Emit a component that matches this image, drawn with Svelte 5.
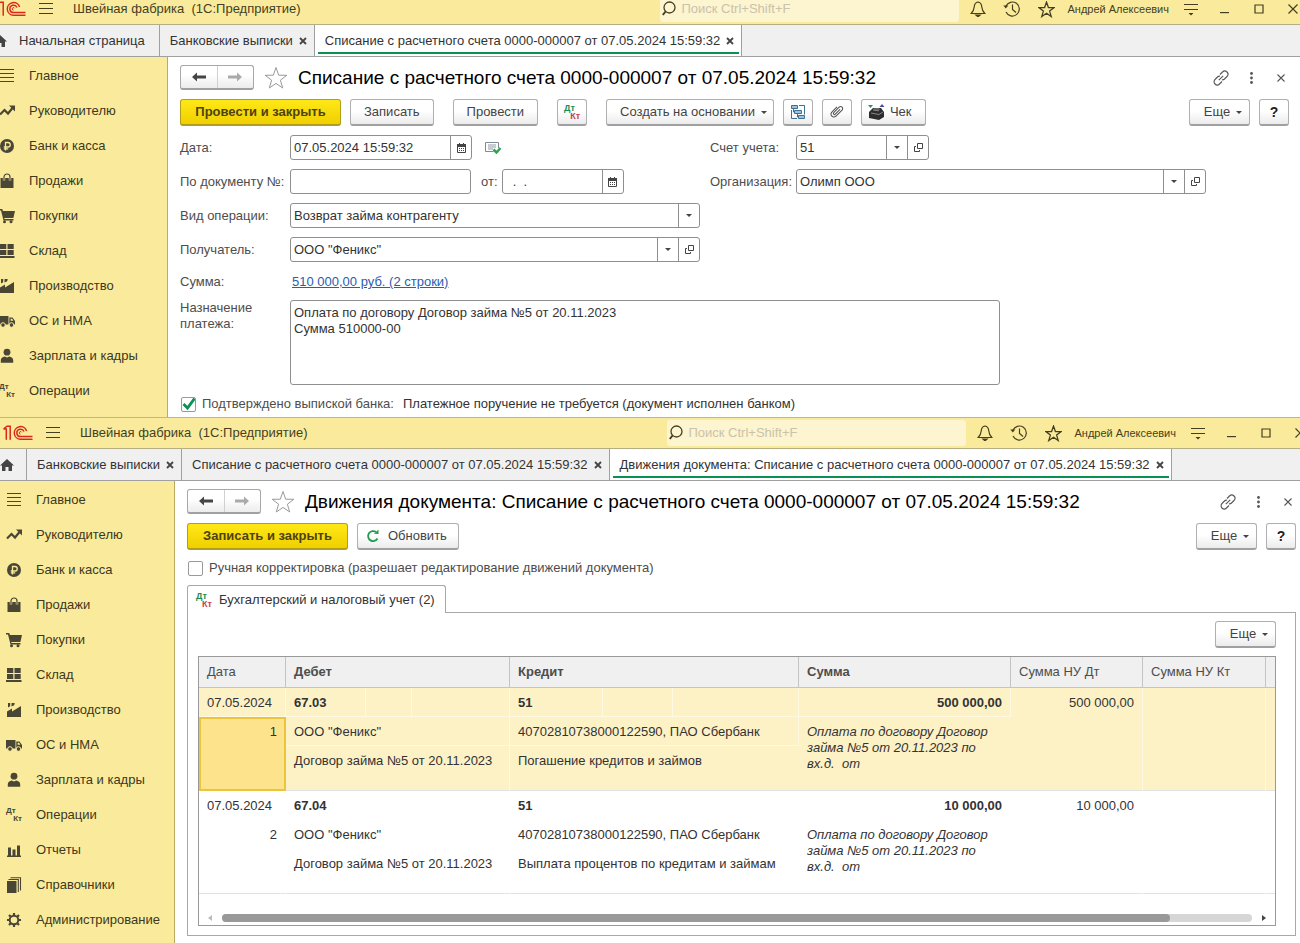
<script>
  const menu = [
    ['list', 'Главное'],
    ['trend', 'Руководителю'],
    ['ruble', 'Банк и касса'],
    ['bag', 'Продажи'],
    ['cart', 'Покупки'],
    ['stock', 'Склад'],
    ['factory', 'Производство'],
    ['truck', 'ОС и НМА'],
    ['person', 'Зарплата и кадры'],
    ['dtkt', 'Операции'],
    ['chart', 'Отчеты'],
    ['books', 'Справочники'],
    ['gear', 'Администрирование']
  ];

  const docTitle = 'Списание с расчетного счета 0000-000007 от 07.05.2024 15:59:32';
  const movesTitle = 'Движения документа: ' + docTitle;

  const entries = [
    {
      n: 1, date: '07.05.2024', debit: '67.03', credit: '51', sum: '500 000,00', tax: '500 000,00',
      partner: 'ООО "Феникс"', contract: 'Договор займа №5 от 20.11.2023',
      account: '40702810738000122590, ПАО Сбербанк', item: 'Погашение кредитов и займов'
    },
    {
      n: 2, date: '07.05.2024', debit: '67.04', credit: '51', sum: '10 000,00', tax: '10 000,00',
      partner: 'ООО "Феникс"', contract: 'Договор займа №5 от 20.11.2023',
      account: '40702810738000122590, ПАО Сбербанк', item: 'Выплата процентов по кредитам и займам'
    }
  ];
  const note = 'Оплата по договору Договор займа №5 от 20.11.2023 по вх.д.\u00a0 от';

  let purpose = $state('Оплата по договору Договор займа №5 от 20.11.2023\nСумма 510000-00');
  let confirmed = $state(true);
  let manual = $state(false);
</script>

{#snippet icon(name)}
  {#if name === 'dtkt'}
    <span class="dtkt mono"><b>Дт</b><b>Кт</b></span>
  {:else}
    <svg class="ic" width="16" height="16" viewBox="0 0 16 16" fill="#4a4635" aria-hidden="true">
      {#if name === 'list'}
        <path d="M1 1h14v1H1zM1 5h14v1H1zM1 9h14v1H1zM1 13h14v1H1z" />
      {:else if name === 'trend'}
        <path d="M1 11.500 5.500 7l3.500 3.500L13.500 5" fill="none" stroke="#4a4635" stroke-width="2.200" />
        <path d="M10 2.500h6v6z" />
      {:else if name === 'ruble'}
        <circle cx="8" cy="8" r="7" />
        <path d="M6.500 12.500v-8H9a2.200 2.200 0 0 1 0 4.500H4.800M4.800 10.800h4.400" fill="none" stroke="#faeb9c" stroke-width="1.300" />
      {:else if name === 'bag'}
        <path d="M1.500 5h13v10h-13z" />
        <path d="M5 7.500V4a3 3 0 0 1 6 0v3.500" fill="none" stroke="#faeb9c" stroke-width="2.400" />
        <path d="M5 7.500V4a3 3 0 0 1 6 0v3.500" fill="none" stroke="#4a4635" stroke-width="1.200" />
      {:else if name === 'cart'}
        <path d="M0 1h3.200l.8 2h12l-1.600 7H5.200l.3 1h9v1.400h-10L2 2.400H0z" />
        <circle cx="5.500" cy="13.700" r="1.500" /><circle cx="12" cy="13.700" r="1.500" />
      {:else if name === 'stock'}
        <path d="M1 1h6.300v5H1zM8.500 1h6.200v5H8.500zM1 7h6.300v5H1zM8.500 7h6.200v5H8.500zM0 13h15.500v2H0z" />
      {:else if name === 'factory'}
        <path d="M1 15V9.500l5-3V9.500l9-5.500v11zM2 1h2.200v3.200L2 5.500zM5.500 1h3.200l-.5 2.200-2.700 1.300z" />
      {:else if name === 'truck'}
        <path d="M0 3h9.500v8.500H0zM10.300 4.500h3.200L16 8v3.500h-5.700z" />
        <path d="M11.600 5.800h1.500l1.300 2h-2.800z" fill="#faeb9c" />
        <circle cx="4" cy="12" r="2.300" stroke="#faeb9c" /><circle cx="12.500" cy="12" r="2.300" stroke="#faeb9c" />
      {:else if name === 'person'}
        <circle cx="8" cy="4.200" r="3.400" />
        <path d="M1.800 14.800v-2.600c0-2 1.800-3.400 4-3.700L8 9.600l2.200-1.100c2.200.3 4 1.700 4 3.700v2.600z" />
      {:else if name === 'chart'}
        <path d="M1 13.500h14V15H1zM2 5.500h3v8H2zM6.500 7.500h3v6h-3zM11 3.500h3v10h-3z" />
      {:else if name === 'books'}
        <path d="M1 4h9.500v12H1z" />
        <path d="M2.500 2.500H12.300V15M4.500.8H14.500V13.500" fill="none" stroke="#4a4635" stroke-width="1.100" />
      {:else if name === 'gear'}
        <circle cx="8" cy="8" r="4.300" fill="none" stroke="#4a4635" stroke-width="2" />
        <path d="M8 1v2.500M8 12.500V15M1 8h2.500M12.500 8H15M3 3l1.800 1.800M11.200 11.200 13 13M13 3l-1.800 1.800M4.800 11.200 3 13" stroke="#4a4635" stroke-width="2.200" />
      {/if}
    </svg>
  {/if}
{/snippet}

{#snippet star(size, color)}
  <svg width={size} height={size} viewBox="0 0 24 24" fill="none" stroke={color} stroke-width={size > 20 ? 1 : 1.8} aria-hidden="true">
    <path d="M12 1.500 14.700 9.200 22.800 9.300 16.400 14.200 18.700 22 12 17.400 5.300 22 7.600 14.200 1.200 9.300 9.300 9.200z" />
  </svg>
{/snippet}

{#snippet caret()}
  <svg class="caret" width="6" height="3" viewBox="0 0 6 3" aria-hidden="true"><path d="M0 0h6L3 3z" fill="#444" /></svg>
{/snippet}

{#snippet openIcon()}
  <svg width="11" height="11" viewBox="0 0 11 11" fill="none" stroke="#444" aria-hidden="true">
    <path d="M4.500 1.500h5v5h-5zM3 4.500H1.500v5h5V8" />
  </svg>
{/snippet}

{#snippet calendar()}
  <svg width="9" height="10" viewBox="0 0 9 10" aria-hidden="true">
    <path d="M.5 1.500h8v8h-8z" fill="#fff" stroke="#444" />
    <path d="M0 1h9v3H0zM2 0h1v2H2zM6 0h1v2H6zM2 5h1v1H2zM4 5h1v1H4zM6 5h1v1H6zM2 7h1v1H2zM4 7h1v1H4zM6 7h1v1H6z" fill="#444" />
  </svg>
{/snippet}

{#snippet closeMark()}
  <svg width="8" height="8" viewBox="0 0 8 8" aria-hidden="true"><path d="M1 1l6 6M7 1 1 7" stroke="#444" stroke-width="1.800" /></svg>
{/snippet}

{#snippet dtktColor()}
  <span class="dtkt color"><b>Дт</b><b>Кт</b></span>
{/snippet}

{#snippet titleBar(id)}
  <header class="bar">
    <svg class="logo" width="30" height="16" viewBox="0 0 30 16" fill="none" stroke="#d8291c" stroke-width="1.500" aria-hidden="true">
      <path d="M.5 4h2.800v10.700M.5 4 4 1.200h3.200v13.500" />
      <path d="M23.600 6A6.300 6.300 0 1 0 17.500 14.200H29.500" />
      <path d="M21 6.500A3.700 3.700 0 1 0 17.500 11.600H29.500" />
      <path d="M18.700 7.300a1.300 1.300 0 1 0-1.200 1.900" stroke-width="1" />
    </svg>
    <button class="bare burger" aria-label="Меню">
      <svg width="16" height="12" viewBox="0 0 16 12"><path d="M1 0h14v1H1zM1 5h14v1H1zM1 10h14v1H1z" fill="#453f22" /></svg>
    </button>
    <span class="app-name">Швейная фабрика&nbsp; (1С:Предприятие)</span>
    <label class="search" for="search-{id}">
      <svg width="16" height="16" viewBox="0 0 16 16" fill="none" stroke="#453f22" aria-label="Поиск">
        <circle cx="7.500" cy="6.500" r="5.500" stroke-width="1.300" /><path d="M3.600 10.500.8 14" stroke-width="2" />
      </svg>
      <input id="search-{id}" type="text" placeholder="Поиск Ctrl+Shift+F" />
    </label>
    <div class="tools">
      <button class="bare" aria-label="Уведомления">
        <svg width="16" height="16" viewBox="0 0 16 16" fill="none" stroke="#453f22" stroke-width="1.200"><path d="M8 1c-3 .5-3.600 2.500-3.800 5S3 10.500 1.200 12.500h13.600C13 10.500 12 8.500 11.800 6S11 1.500 8 1z" /><path d="M6 14.200h4L8 15.800z" fill="#453f22" /></svg>
      </button>
      <button class="bare" aria-label="История">
        <svg width="18" height="16" viewBox="0 0 18 16" fill="none" stroke="#453f22" stroke-width="1.200"><path d="M2.800 5.500A7 7 0 1 1 3 11M9.500 3.500v5l3.500 3" /><path d="M.3 4.500h5L2.800 7.500z" fill="#453f22" stroke="none" /></svg>
      </button>
      <button class="bare" aria-label="Избранное">{@render star(17, '#453f22')}</button>
    </div>
    <span class="user">Андрей Алексеевич</span>
    <div class="tools">
      <button class="bare" aria-label="Настройки">
        <svg width="16" height="13" viewBox="0 0 16 13"><path d="M1 1h14v1H1zM1 6h14v1H1zM5.500 10h5L8 12.500z" fill="#453f22" /></svg>
      </button>
      <button class="bare" aria-label="Свернуть">
        <svg width="10" height="10" viewBox="0 0 10 10"><path d="M0 8h9v1.200H0z" fill="#453f22" /></svg>
      </button>
      <button class="bare" aria-label="Развернуть">
        <svg width="10" height="10" viewBox="0 0 10 10"><path d="M1 1h8v8H1z" fill="none" stroke="#453f22" stroke-width="1.200" /></svg>
      </button>
      <button class="bare" aria-label="Закрыть">
        <svg width="10" height="10" viewBox="0 0 10 10"><path d="M.5.5l9 9M9.500.5l-9 9" stroke="#453f22" stroke-width="1.200" /></svg>
      </button>
    </div>
  </header>
{/snippet}

{#snippet tab(text, active)}
  <div class="tab" class:active>
    <a href="#tab">{text}</a>
    <button class="bare" aria-label="Закрыть вкладку">{@render closeMark()}</button>
  </div>
{/snippet}

{#snippet home()}
  <svg class="home-ic" width="14" height="12" viewBox="0 0 14 12" aria-hidden="true"><path d="M7 0 14 6.500h-2V12H8.500V8h-3v4H2V6.500H0z" fill="#444" /></svg>
{/snippet}

{#snippet side(count)}
  <nav class="side">
    {#each menu.slice(0, count) as [name, label]}
      <a href="#section">{@render icon(name)}<span>{label}</span></a>
    {/each}
  </nav>
{/snippet}

{#snippet heading(text)}
  <div class="heading">
    <div class="history">
      <button aria-label="Назад"><svg width="14" height="10" viewBox="0 0 14 10"><path d="M0 5l5-4.500v3h9v3H5v3z" fill="#444" /></svg></button>
      <button aria-label="Вперед"><svg width="14" height="10" viewBox="0 0 14 10"><path d="M14 5 9 .5v3H0v3h9v3z" fill="#aaa" /></svg></button>
    </div>
    <button class="bare fav" aria-label="В избранное">{@render star(24, '#999')}</button>
    <h1>{text}</h1>
    <div class="form-tools">
      <button class="bare" aria-label="Ссылка">
        <svg width="16" height="16" viewBox="0 0 16 16" fill="none" stroke="#555" stroke-width="1.100">
          <path d="M7 4.500l2.500-2.500a2.900 2.900 0 0 1 4.500 4.500L11.500 9a2.900 2.900 0 0 1-2.500.8M9 11.500l-2.500 2.500a2.900 2.900 0 0 1-4.500-4.500L4.500 7a2.900 2.900 0 0 1 2.500-.8M5.800 10.200l4.400-4.400" />
        </svg>
      </button>
      <button class="bare" aria-label="Действия">
        <svg width="3" height="12" viewBox="0 0 3 12" fill="#555"><circle cx="1.500" cy="1.500" r="1.400" /><circle cx="1.500" cy="6" r="1.400" /><circle cx="1.500" cy="10.500" r="1.400" /></svg>
      </button>
      <button class="bare" aria-label="Закрыть форму">
        <svg width="8" height="8" viewBox="0 0 8 8"><path d="M.5.5l7 7M7.500.5l-7 7" stroke="#555" stroke-width="1.100" /></svg>
      </button>
    </div>
  </div>
{/snippet}

{#snippet picker(id, value, withOpen)}
  <div class="field">
    <div class="pick">
      <select {id}><option>{value}</option></select>
      <span class="cap">{@render caret()}</span>
    </div>
    {#if withOpen}<button class="cap" aria-label="Открыть">{@render openIcon()}</button>{/if}
  </div>
{/snippet}

<main>
  <section class="window first">
    {@render titleBar('doc')}
    <div class="tabs">
      <div class="tab home">{@render home()}<a href="#home">Начальная страница</a></div>
      {@render tab('Банковские выписки', false)}
      {@render tab(docTitle, true)}
    </div>
    <div class="body">
      {@render side(10)}
      <div class="content">
        {@render heading(docTitle)}
        <div class="toolbar">
          <button class="btn primary">Провести и закрыть</button>
          <button class="btn">Записать</button>
          <button class="btn apart">Провести</button>
          <button class="btn square apart" aria-label="Дт Кт">{@render dtktColor()}</button>
          <button class="btn apart drop">Создать на основании {@render caret()}</button>
          <button class="btn square" aria-label="Структура подчиненности">
            <svg width="16" height="16" viewBox="0 0 16 16" fill="none" stroke="#3e7295">
              <path d="M1.500 1.500h6v3h-6zM4.500 6.500h7v3h-7zM8.500 11.500h6v3h-6z" fill="#9cc3de" />
              <path d="M9 1.500h5.500v9M1.500 6v8.500H7M3.500 4.500v3.500h1M7.500 9.500V13h1" />
            </svg>
          </button>
          <button class="btn square" aria-label="Файлы">
            <svg width="14" height="14" viewBox="0 0 16 16" fill="none" stroke="#555" stroke-width="1.200">
              <path d="M11.500 5 6 10.500a1.200 1.200 0 0 1-1.800-1.700L10.500 2.500a2.300 2.300 0 0 1 3.300 3.300L6.800 12.800a3.300 3.300 0 0 1-4.700-4.700L8 2.200" />
            </svg>
          </button>
          <button class="btn check">
            <svg width="17" height="16" viewBox="0 0 17 16">
              <path d="M1 8l4-4h8l3 4v5l-5 3-10-2z" fill="#2d2d2f" />
              <path d="M3 9l8 1.500L15 8M5 6l6 .8" stroke="#888" fill="none" />
              <path d="M6 4h5l1 2H5z" fill="#666" />
              <path d="M0 1h5L2.500 4z" fill="#1c9a62" /><path d="M11.500 3h5L14 0z" fill="#4a46a8" />
            </svg>
            Чек
          </button>
          <button class="btn more">Еще {@render caret()}</button>
          <button class="btn help">?</button>
        </div>

        <div class="form">
          <label for="date">Дата:</label>
          <div class="line">
            <div class="field date">
              <input id="date" type="text" value="07.05.2024 15:59:32" />
              <button class="cap" aria-label="Выбрать дату">{@render calendar()}</button>
            </div>
            <svg class="posted" width="16" height="14" viewBox="0 0 16 14" fill="none">
              <path d="M13.500 7V1.500H.5v9h8" stroke="#7d8a96" /><path d="M3 4h8M3 6h8M3 8h5" stroke="#8a97a3" />
              <path d="M8.500 8.500l3 3 4-4.500" stroke="#2fa34d" stroke-width="2.500" />
            </svg>
          </div>
          <label class="second-label" for="account">Счет учета:</label>
          <div class="short">{@render picker('account', '51', true)}</div>

          <label for="docnum">По документу №:</label>
          <div class="line">
            <div class="field number"><input id="docnum" type="text" /></div>
            <label for="from">от:</label>
            <div class="field from">
              <input id="from" type="text" value="&nbsp; .&nbsp; ." />
              <button class="cap" aria-label="Выбрать дату документа">{@render calendar()}</button>
            </div>
          </div>
          <label class="second-label" for="org">Организация:</label>
          {@render picker('org', 'Олимп ООО', true)}

          <label for="kind">Вид операции:</label>
          {@render picker('kind', 'Возврат займа контрагенту', false)}
          <label class="start" for="payee">Получатель:</label>
          {@render picker('payee', 'ООО "Феникс"', true)}
        </div>
        <div class="form wide">
          <span>Сумма:</span>
          <a class="sum" href="#sum">510 000,00 руб. (2 строки)</a>
          <label class="top" for="purpose">Назначение платежа:</label>
          <textarea id="purpose" bind:value={purpose}></textarea>
        </div>
        <div class="tick confirm">
          <input id="confirmed" type="checkbox" bind:checked={confirmed} />
          <label for="confirmed">Подтверждено выпиской банка:</label>
          <span>Платежное поручение не требуется (документ исполнен банком)</span>
        </div>
      </div>
    </div>
  </section>

  <section class="window second">
    {@render titleBar('moves')}
    <div class="tabs">
      <div class="tab home"><a href="#home" aria-label="Начальная страница">{@render home()}</a></div>
      {@render tab('Банковские выписки', false)}
      {@render tab(docTitle, false)}
      {@render tab(movesTitle, true)}
    </div>
    <div class="body">
      {@render side(13)}
      <div class="content">
        {@render heading(movesTitle)}
        <div class="toolbar">
          <button class="btn primary">Записать и закрыть</button>
          <button class="btn refresh">
            <svg width="14" height="14" viewBox="0 0 14 14" fill="none"><path d="M11.500 9.500A5 5 0 1 1 10 3" stroke="#1e9e50" stroke-width="1.800" /><path d="M8 4.800 12.500 5V.5z" fill="#1e9e50" /></svg>
            Обновить
          </button>
          <button class="btn more">Еще {@render caret()}</button>
          <button class="btn help">?</button>
        </div>
        <div class="tick manual">
          <input id="manual" type="checkbox" bind:checked={manual} />
          <label for="manual">Ручная корректировка (разрешает редактирование движений документа)</label>
        </div>
        <button class="page-tab">{@render dtktColor()}Бухгалтерский и налоговый учет (2)</button>
        <div class="panel">
          <button class="btn more">Еще {@render caret()}</button>
          <div class="grid">
            <table>
              <colgroup>
                <col class="c-date" /><col class="c-d1" /><col class="c-d2" /><col class="c-d3" />
                <col class="c-k1" /><col class="c-k2" /><col class="c-k3" />
                <col class="c-sum" /><col class="c-dt" /><col class="c-kt" /><col />
              </colgroup>
              <thead>
                <tr>
                  <th class="plain">Дата</th><th colspan="3">Дебет</th><th colspan="3">Кредит</th><th>Сумма</th>
                  <th class="plain">Сумма НУ Дт</th><th class="plain">Сумма НУ Кт</th><th></th>
                </tr>
              </thead>
              {#each entries as e, i}
                <tbody class:selected={i === 0}>
                  <tr class="r1">
                    <td>{e.date}</td>
                    <td class="b">{e.debit}</td><td></td><td></td>
                    <td class="b">{e.credit}</td><td></td><td></td>
                    <td class="b num">{e.sum}</td>
                    <td class="num tall" rowspan="3">{e.tax}</td><td class="tall" rowspan="3"></td><td class="tall" rowspan="3"></td>
                  </tr>
                  <tr class="r2">
                    <td class="num current tall" rowspan="2">{e.n}</td>
                    <td colspan="3">{e.partner}</td>
                    <td colspan="3">{e.account}</td>
                    <td class="note tall" rowspan="2">{note}</td>
                  </tr>
                  <tr class="r3">
                    <td class="tall" colspan="3">{e.contract}</td>
                    <td class="tall" colspan="3">{e.item}</td>
                  </tr>
                </tbody>
              {/each}
            </table>
            <div class="scroll">
              <svg width="4" height="6" viewBox="0 0 4 6"><path d="M4 0v6L0 3z" fill="#bbb" /></svg>
              <div class="track"><div class="thumb"></div></div>
              <svg width="4" height="6" viewBox="0 0 4 6"><path d="M0 0v6l4-3z" fill="#444" /></svg>
            </div>
          </div>
        </div>
      </div>
    </div>
  </section>
</main>

<style>
  :global(body) { margin: 0; background: #fff; }
  main, main * { box-sizing: border-box; }
  main { font: 13px/16px "Liberation Sans", Arial, sans-serif; color: #333; overflow: hidden; }
  button, input, select, textarea { font: inherit; color: inherit; margin: 0; }
  a { color: inherit; text-decoration: none; }
  svg { display: block; flex: none; }
  .bare { border: 0; background: none; padding: 0; display: flex; align-items: center; justify-content: center; }

  .window { overflow: hidden; }
  .second { border-top: 1px solid #c9b964; }

  .bar {
    height: 31px; display: flex; align-items: center;
    background: #faeb9c; border-bottom: 1px solid #b5ad83; color: #453f22;
    padding-left: 3px; margin-right: -10px;
  }
  .first .bar { height: 25px; margin-right: -3px; padding: 0 0 6px; }
  .first .logo { margin-left: -4px; }
  .burger { width: 16px; margin-left: 12px; }
  .app-name { margin-left: 19px; white-space: nowrap; }
  .search {
    width: 299px; height: 26px; margin: 0 9px 0 auto; padding-left: 2px;
    display: flex; align-items: center; gap: 3px; background: #fdf4d0; border-radius: 3px;
  }
  .search input { flex: 1; min-width: 0; border: 0; padding: 0; background: none; outline: 0; }
  .search input::placeholder { color: #c9c3ab; opacity: 1; }
  .tools { display: flex; gap: 14px; }
  .tools .bare { width: 20px; height: 20px; }
  .user { font-size: 11px; margin: 0 12px 0 11px; white-space: nowrap; }

  .tabs { display: flex; height: 32px; background: #f0f0f0; border-bottom: 1px solid #a0a0a0; }
  .tab { display: flex; align-items: center; gap: 6px; padding: 0 7px 0 10px; border-right: 1px solid #a0a0a0; white-space: nowrap; }
  .tab.active { background: linear-gradient(#0a9153, #0a9153) 3px 27px / calc(100% - 5px) 2px no-repeat #fff; }
  .tab.home { padding: 0 12px 0 0; }
  .first .tab.home { padding-right: 14px; gap: 12px; }
  .first .home-ic { margin-left: -7px; }

  .body { display: flex; }
  .side { flex: none; width: 175px; padding-top: 1px; background: #faeb9c; border-right: 1px solid #b9ab62; color: #3d3820; }
  .side a { display: flex; align-items: center; gap: 14px; height: 35px; padding-left: 6px; white-space: nowrap; }
  .first .side { width: 168px; }
  .first .side a { padding: 0; margin-left: -1px; }
  .second .side { padding-bottom: 6px; }

  .dtkt { width: 16px; flex: none; display: flex; flex-direction: column; font-size: 8px; line-height: 8px; text-align: left; }
  .dtkt b:last-child { align-self: flex-end; }
  .mono { color: #4a4635; }
  .color { font-size: 9px; }
  .color b:first-child { color: #1a8d53; }
  .color b:last-child { color: #c8414b; }

  .content { flex: 1; min-width: 0; padding: 8px 4px 0 12px; }
  .first .content { padding-right: 11px; }
  .heading { display: flex; align-items: center; height: 25px; }
  .history { display: flex; width: 74px; height: 25px; border: 1px solid #a8a8a8; border-bottom: 2px solid #a0a0a0; border-radius: 3px; background: linear-gradient(#fff 40%, #ececec); }
  .history button { flex: 1; border: 0; padding: 0; background: none; display: flex; align-items: center; justify-content: center; }
  .history button + button { border-left: 1px solid #d0d0d0; }
  .fav { width: 24px; margin: 0 10px; }
  h1 { margin: 0; font-size: 19px; line-height: 24px; font-weight: 400; color: #000; white-space: nowrap; }
  .form-tools { display: flex; gap: 14px; margin-left: auto; }
  .form-tools .bare { width: 16px; height: 16px; }

  .toolbar { display: flex; gap: 9px; margin-top: 9px; }
  .btn {
    height: 27px; padding: 0 13px; display: flex; align-items: center; justify-content: center; white-space: nowrap;
    border: 1px solid #b0b0b0; border-bottom: 2px solid #a0a0a0; border-radius: 3px;
    background: linear-gradient(#fff 45%, #ebebeb); color: #444;
  }
  .primary { min-width: 161px; padding: 0 12px; font-weight: 700; background: linear-gradient(#ffe817, #f0cf00); border-color: #b39d1c; color: #4d4310; }
  .apart { margin-left: 10px; }
  .square { width: 30px; padding: 0; }
  .drop { padding-right: 6px; gap: 6px; }
  .check { padding: 0 13px 0 6px; gap: 5px; }
  .refresh { padding: 0 11px 0 8px; gap: 8px; }
  .more { width: 61px; padding: 0 6px 0 13px; gap: 6px; margin-left: auto; }
  .help { width: 30px; padding: 0; font-size: 14px; font-weight: 700; color: #222; }

  .form { display: grid; grid-template-columns: 110px minmax(0, 410px) 96px minmax(0, 410px); row-gap: 9px; align-items: center; margin-top: 9px; color: #4d4d4d; }
  .second-label { padding-left: 10px; }
  .start { grid-column: 1; }
  .form.wide { grid-template-columns: 110px minmax(0, 710px); row-gap: 10px; margin-top: 12px; }
  .top { align-self: start; }
  .line { display: flex; align-items: center; }
  .line > label { margin: 0 4px 0 10px; }
  .field { display: flex; height: 25px; border: 1px solid #8f8f8f; border-radius: 3px; background: #fff; color: #333; }
  .field input { flex: 1; min-width: 0; border: 0; padding: 0 3px; background: none; outline: 0; }
  .date { width: 182px; }
  .number { width: 181px; }
  .from { width: 122px; }
  .short { width: 133px; }
  .posted { margin-left: 13px; }
  .cap { width: 21px; flex: none; display: flex; align-items: center; justify-content: center; border: 0; border-left: 1px solid #8f8f8f; padding: 0; background: none; }
  .pick { flex: 1; min-width: 0; display: grid; }
  .pick > * { grid-area: 1 / 1; }
  .pick .cap { justify-self: end; pointer-events: none; }
  select { width: 100%; appearance: none; border: 0; padding: 0 24px 0 3px; background: none; outline: 0; }
  .sum { color: #2a5db0; text-decoration: underline; padding-left: 2px; }
  textarea { display: block; width: 100%; height: 85px; padding: 4px 3px; border: 1px solid #8f8f8f; border-radius: 3px; resize: none; outline: 0; color: #333; }

  .tick { display: flex; align-items: center; color: #4d4d4d; white-space: nowrap; }
  .tick input { appearance: none; width: 15px; height: 15px; margin: 0 6px 0 1px; border: 1px solid #999; border-radius: 2px; background: #fff; }
  .tick input:checked { background: url("data:image/svg+xml,%3Csvg xmlns='http://www.w3.org/2000/svg' viewBox='0 0 14 14'%3E%3Cpath d='M2 6.500 6 10.500 13 1' fill='none' stroke='%230d9157' stroke-width='2.800'/%3E%3C/svg%3E") center / 14px; }
  .tick span { margin-left: 9px; color: #333; }
  .confirm { margin: 11px 0 5px; }
  .manual { margin: 10px 0 9px; }

  .page-tab {
    display: flex; align-items: center; gap: 7px; height: 28px; padding: 0 10px 0 8px; margin-bottom: -1px;
    border: 1px solid #a8a8a8; border-bottom: 0; border-radius: 3px 3px 0 0; background: #fff; position: relative; white-space: nowrap;
  }
  .panel { border: 1px solid #a8a8a8; padding: 8px 19px 9px 10px; margin-bottom: 7px; }
  .grid { margin-top: 8px; border: 1px solid #999; }
  table { width: 100%; table-layout: fixed; border-collapse: separate; border-spacing: 0; }
  .c-date { width: 87px; } .c-d1 { width: 80px; } .c-d2 { width: 46px; } .c-d3 { width: 98px; }
  .c-k1 { width: 93px; } .c-k2 { width: 70px; } .c-k3 { width: 126px; }
  .c-sum { width: 212px; } .c-dt { width: 132px; } .c-kt { width: 123px; }
  th { height: 31px; padding: 0 8px; background: #f0f0f0; border-right: 1px solid #c4c4c4; border-bottom: 1px solid #c4c4c4; text-align: left; color: #4d4d4d; }
  th:last-child { border-right: 0; }
  .plain { font-weight: 400; }
  td { padding: 7px 8px 0; vertical-align: top; white-space: nowrap; border-right: 1px solid transparent; border-bottom: 1px solid transparent; }
  .selected td { background: #fdf1c6; border-color: #fff8e2; }
  td:last-child { border-right: 0; }
  tbody .tall { border-bottom-color: #e2e2e2; }
  .r1, .r2 { height: 29px; }
  .r3 { height: 45px; }
  .b { font-weight: 700; }
  .num { text-align: right; }
  .note { font-style: italic; white-space: normal; padding-right: 20px; }
  .selected .current { background: #fde48c; border: 2px solid #ecc53f; padding: 5px 7px 0; }
  .scroll { display: flex; align-items: center; gap: 10px; padding: 20px 9px 3px; }
  .track { flex: 1; height: 8px; border-radius: 4px; background: #d6d6d6; }
  .thumb { width: 92%; height: 8px; border-radius: 4px; background: #999; }
</style>
